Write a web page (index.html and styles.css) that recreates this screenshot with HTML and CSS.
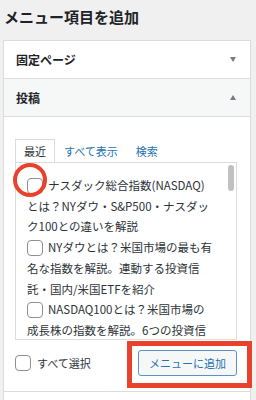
FILE: index.html
```html
<!DOCTYPE html>
<html lang="ja">
<head>
  <meta charset="UTF-8" />
  <meta name="viewport" content="width=device-width, initial-scale=1.0"/>
  <title>メニュー項目を追加</title>
  <link rel="stylesheet" href="styles.css">
</head>
<body>
  <h2 class="title">メニュー項目を追加</h2>

  <div class="panel">
    <div class="acc-head">
      <span>固定ページ</span>
      <span class="arrow down"></span>
    </div>

    <div class="acc-head open">
      <span>投稿</span>
      <span class="arrow up"></span>
    </div>

    <div class="acc-body">
      <ul class="tabs">
        <li class="active">最近</li>
        <li>すべて表示</li>
        <li>検索</li>
      </ul>

      <div class="list-box">
        <ul class="post-list">
          <li><label><input type="checkbox">ナスダック総合指数(NASDAQ)<br>とは？NYダウ・S&amp;P500・ナスダッ<br>ク100との違いを解説</label></li>
          <li><label><input type="checkbox">NYダウとは？米国市場の最も有<br>名な指数を解説。連動する投資信<br>託・国内/米国ETFを紹介</label></li>
          <li><label><input type="checkbox">NASDAQ100とは？米国市場の<br>成長株の指数を解説。6つの投資信<br>託を紹介</label></li>
        </ul>
        <span class="thumb"></span>
      </div>

      <div class="actions">
        <label class="select-all"><input type="checkbox"><span>すべて選択</span></label>
        <button class="add-btn">メニューに追加</button>
      </div>
    </div>

    <!-- next accordion section, only its top edge is in view -->
    <div class="acc-next"></div>
  </div>

  <!-- annotations -->
  <div class="mark-circle"></div>
  <div class="mark-box"></div>
</body>
</html>
```

FILE: styles.css
```css
body {
  margin: 0;
  width: 256px;
  height: 400px;
  overflow: hidden;
  background: #f0f0f1;
  color: #1d2327;
  font-family: "Noto Sans CJK JP", "Liberation Sans", sans-serif;
}
.title {
  margin: 0;
  padding: 7px 4px 13px;
  font-size: 15px;
  line-height: 20px;
  font-weight: bold;
}
.panel {
  margin-left: 3px;
  width: 248px;
  box-sizing: border-box;
  background: #fff;
  border: 1px solid #dcdcde;
  border-bottom: none;
}
.acc-head {
  height: 38px;
  box-sizing: border-box;
  padding: 0 14px 0 12px;
  display: flex;
  align-items: center;
  justify-content: space-between;
  font-size: 12px;
  font-weight: bold;
  color: #1d2327;
  border-bottom: 1px solid #dcdcde;
}
.acc-head.open {
  background: #f6f7f7;
}
.acc-next {
  height: 12px;
  border-top: 1px solid #dcdcde;
}
.arrow {
  width: 0;
  height: 0;
  border-left: 3.5px solid transparent;
  border-right: 3.5px solid transparent;
}
.arrow.down {
  border-top: 5px solid #787c82;
}
.arrow.up {
  border-bottom: 5px solid #787c82;
}
.acc-body {
  padding: 22px 13px 15px 11px;
}
.tabs {
  list-style: none;
  margin: 0;
  padding: 0;
  display: flex;
  font-size: 11px;
}
.tabs li {
  height: 22px;
  line-height: 22px;
  padding: 0 8px;
  color: #2271b1;
  border: 1px solid transparent;
  border-bottom: none;
}
.tabs li.active {
  color: #2c3338;
  background: #fff;
  border-color: #dcdcde;
  position: relative;
  margin-bottom: -1px;
  z-index: 1;
}
.list-box {
  position: relative;
  height: 178px;
  box-sizing: border-box;
  border: 1px solid #dcdcde;
  overflow: hidden;
  padding: 12px 0 0 11px;
}
.post-list {
  list-style: none;
  margin: 0;
  padding: 0;
  white-space: nowrap;
  font-size: 11.5px;
  line-height: 20.7px;
  color: #2c3338;
}
input[type="checkbox"] {
  appearance: none;
  -webkit-appearance: none;
  width: 16px;
  height: 16px;
  margin: 0 5px 0 0;
  border: 1px solid #8c8f94;
  border-radius: 4px;
  background: #fff;
  vertical-align: -4px;
}
.thumb {
  position: absolute;
  top: 2px;
  right: 2px;
  width: 6px;
  height: 26px;
  border-radius: 3px;
  background: #c1c1c1;
}
.actions {
  margin-top: 10px;
  display: flex;
  align-items: center;
  justify-content: space-between;
}
.select-all {
  display: flex;
  align-items: center;
  font-size: 11px;
  color: #2c3338;
}
.select-all input {
  margin-right: 6px;
}
.add-btn {
  height: 26px;
  padding: 0 10px;
  border: 1px solid #5b93c7;
  border-radius: 3px;
  background: #f6f7f7;
  color: #2271b1;
  font-family: inherit;
  font-size: 11px;
}
.mark-circle {
  position: absolute;
  left: 13px;
  top: 163px;
  width: 34px;
  height: 34px;
  box-sizing: border-box;
  border: 4.5px solid #e8412c;
  border-radius: 50%;
}
.mark-box {
  position: absolute;
  left: 127px;
  top: 341px;
  width: 125px;
  height: 47px;
  box-sizing: border-box;
  border: 5px solid #e8412c;
}
```
